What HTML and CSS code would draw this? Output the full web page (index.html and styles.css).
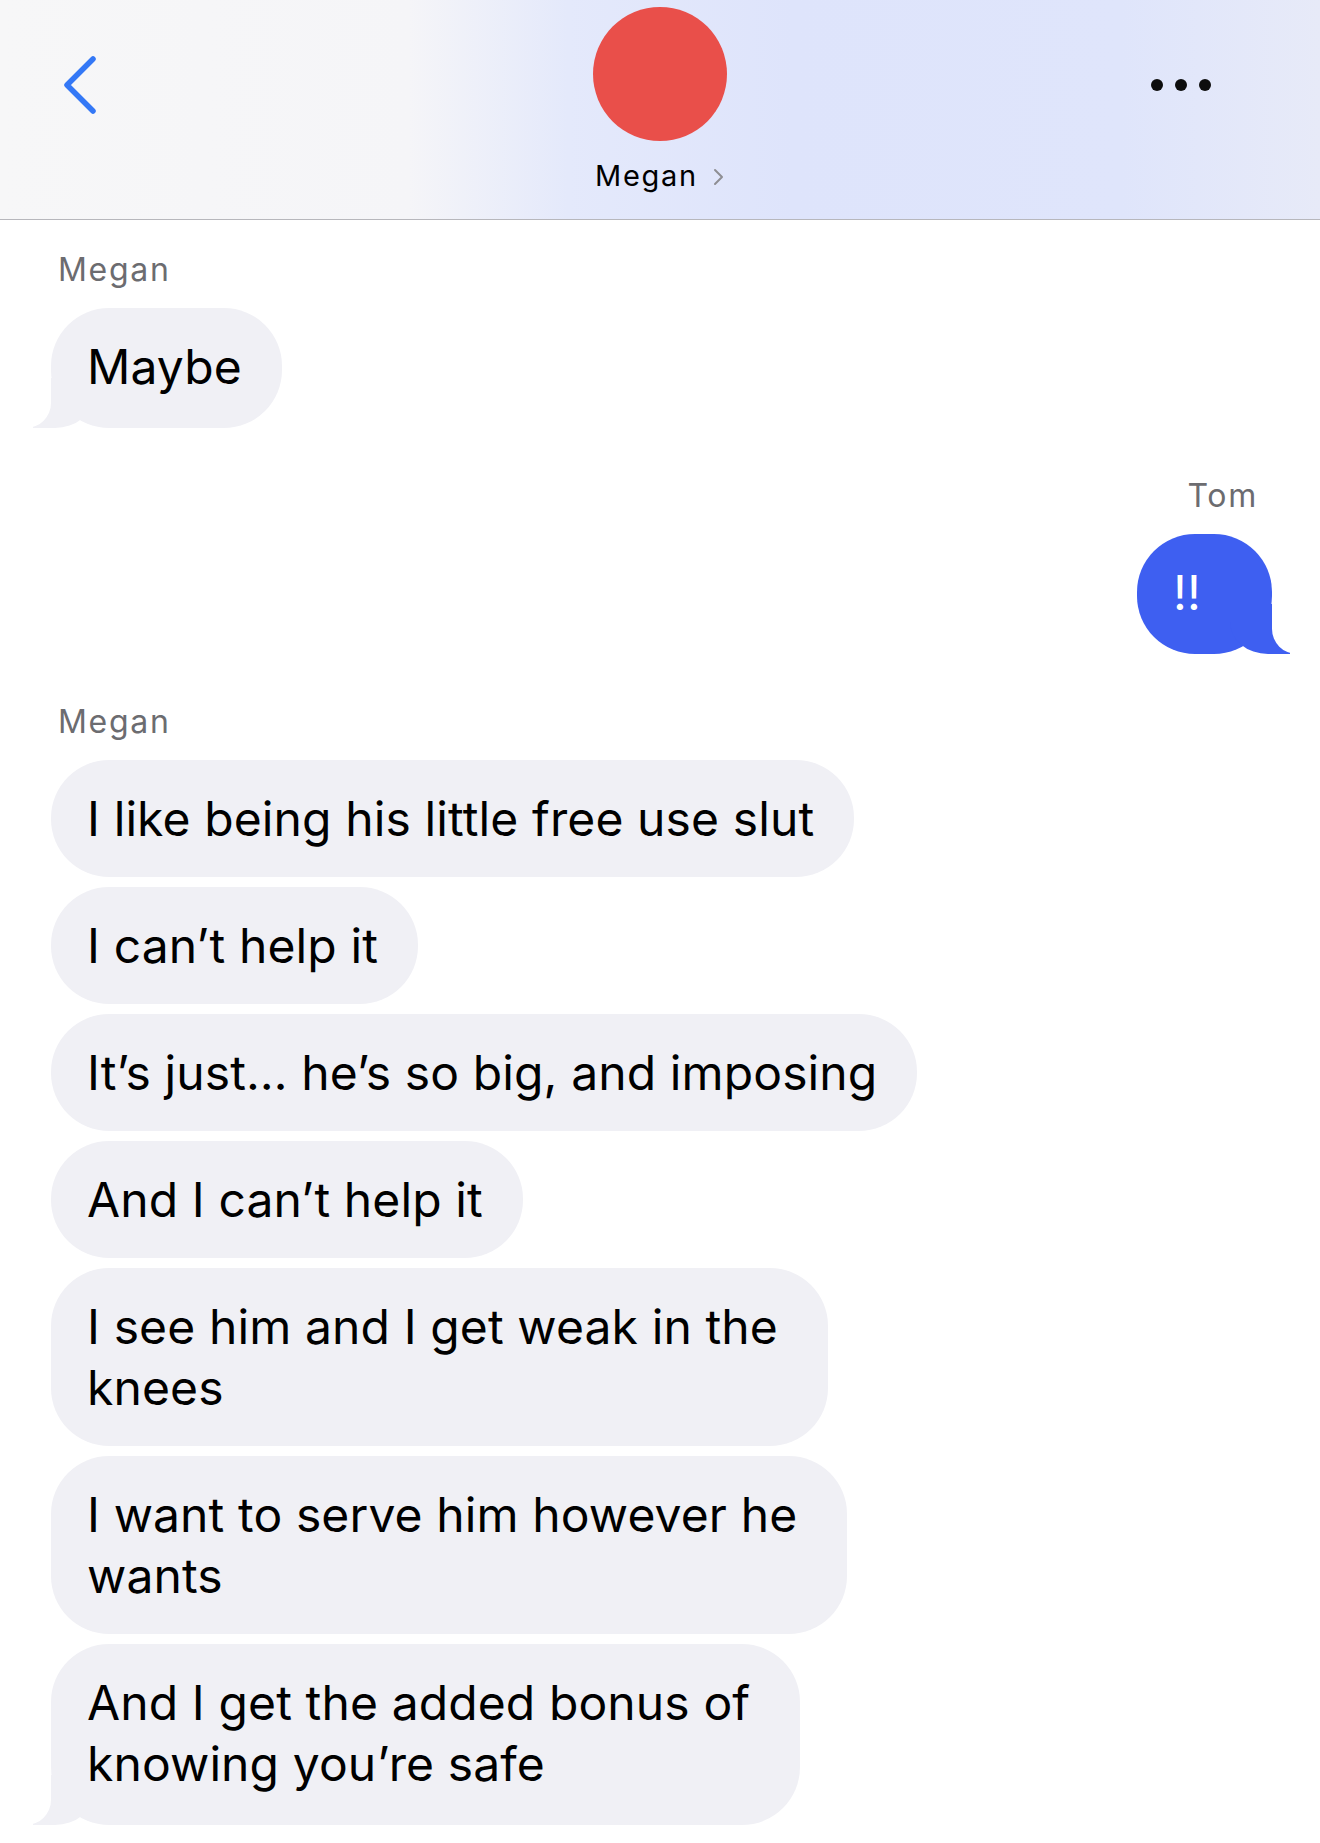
FILE: index.html
```html
<!DOCTYPE html>
<html lang="en">

<head>
    <meta charset="UTF-8">
    <meta name="viewport" content="width=device-width, initial-scale=1.0">
    <title>Megan</title>
    <link rel="stylesheet" href="styles.css">
</head>

<body>
    <header class="topbar">
        <a href="javascript:;" class="back">
            <svg width="36" height="60" viewBox="0 0 36 60">
                <polyline points="31,4 5,30 31,56" fill="none" stroke="#3478f6" stroke-width="5.5" stroke-linecap="round" stroke-linejoin="round" />
            </svg>
        </a>

        <div class="contact">
            <div class="avatar"></div>
            <div class="name">
                <span>Megan</span>
                <svg width="13" height="18" viewBox="0 0 13 18">
                    <polyline points="3,2 10,9 3,16" fill="none" stroke="#8e8e93" stroke-width="2" stroke-linecap="round" stroke-linejoin="round" />
                </svg>
            </div>
        </div>

        <a href="javascript:;" class="more">
            <span></span>
            <span></span>
            <span></span>
        </a>
    </header>

    <div class="thread">
        <div class="group in">
            <div class="label">Megan</div>
            <div class="bubble tail">Maybe</div>
        </div>

        <div class="group out">
            <div class="label">Tom</div>
            <div class="bubble tail">!!</div>
        </div>

        <div class="group in">
            <div class="label">Megan</div>
            <div class="bubble">I like being his little free use slut</div>
            <div class="bubble">I can’t help it</div>
            <div class="bubble">It’s just… he’s so big, and imposing</div>
            <div class="bubble">And I can’t help it</div>
            <div class="bubble multi">I see him and I get weak in the<br>knees</div>
            <div class="bubble multi">I want to serve him however he<br>wants</div>
            <div class="bubble multi tail">And I get the added bonus of<br>knowing you’re safe</div>
        </div>
    </div>
</body>

</html>
```

FILE: styles.css
```css
* {
    margin: 0;
    padding: 0;
    box-sizing: border-box;
}

a {
    text-decoration: none;
}

body {
    background-color: #fff;
    font-family: Inter, "Liberation Sans", sans-serif;
    color: #000;
    overflow: hidden;
}

/* 顶部栏 */
.topbar {
    display: grid;
    grid-template-columns: 1fr auto 1fr;
    height: 220px;
    border-bottom: 1px solid #b7b7bc;
    background: linear-gradient(90deg, #f7f7f8 0%, #f5f5f8 31%, #e4e9fb 43%, #dee4fb 60%, #dfe5fb 85%, #e7eaf8 100%);
}

.topbar .back {
    justify-self: start;
    margin: 55px 0 0 62px;
    height: 60px;
}

.contact {
    display: flex;
    flex-direction: column;
    align-items: center;
    padding-top: 7px;
}

.avatar {
    width: 134px;
    height: 134px;
    border-radius: 50%;
    background-color: #e94f4a;
}

.name {
    display: flex;
    align-items: center;
    gap: 14px;
    margin-top: 17px;
    font-size: 29px;
    line-height: 36px;
    letter-spacing: 1.7px;
    color: #000;
}

.name svg {
    margin-top: 2px;
}

.topbar .more {
    justify-self: end;
    display: flex;
    gap: 12px;
    height: 12px;
    margin: 79px 109px 0 0;
}

.more span {
    width: 12px;
    height: 12px;
    border-radius: 50%;
    background-color: #0d0d0d;
}

/* 消息列表 */
.thread {
    padding: 30px 48px 0 51px;
}

.group {
    display: flex;
    flex-direction: column;
    gap: 10px;
    margin-bottom: 48px;
}

.group.in {
    align-items: flex-start;
}

.group.out {
    align-items: flex-end;
}

.label {
    margin-bottom: 8px;
    padding: 0 14px 0 7px;
    font-size: 32px;
    line-height: 40px;
    letter-spacing: 1.7px;
    color: #6c6c70;
}

.bubble {
    position: relative;
    z-index: 0;
    padding: 28px 40px 28px 36px;
    border-radius: 58px;
    font-size: 48px;
    line-height: 61px;
    letter-spacing: 0.12px;
}

.bubble.multi {
    padding-right: 50px;
}

.in .bubble {
    background-color: #f0f0f5;
}

.out .bubble {
    min-width: 135px;
    background-color: #3e5ff1;
    color: #fff;
}

.bubble.tail {
    padding-bottom: 31px;
}

/* 气泡尾巴 */
.bubble.tail::before,
.bubble.tail::after {
    content: "";
    position: absolute;
    z-index: -1;
    bottom: 0;
    height: 50px;
}

.in .bubble.tail::before {
    left: -18px;
    width: 60px;
    background-color: #f0f0f5;
    border-bottom-right-radius: 38px 32px;
}

.in .bubble.tail::after {
    left: -65px;
    width: 65px;
    background-color: #fff;
    border-bottom-right-radius: 25px;
}

.out .bubble.tail::before {
    right: -18px;
    width: 60px;
    background-color: #3e5ff1;
    border-bottom-left-radius: 38px 32px;
}

.out .bubble.tail::after {
    right: -65px;
    width: 65px;
    background-color: #fff;
    border-bottom-left-radius: 25px;
}
```
